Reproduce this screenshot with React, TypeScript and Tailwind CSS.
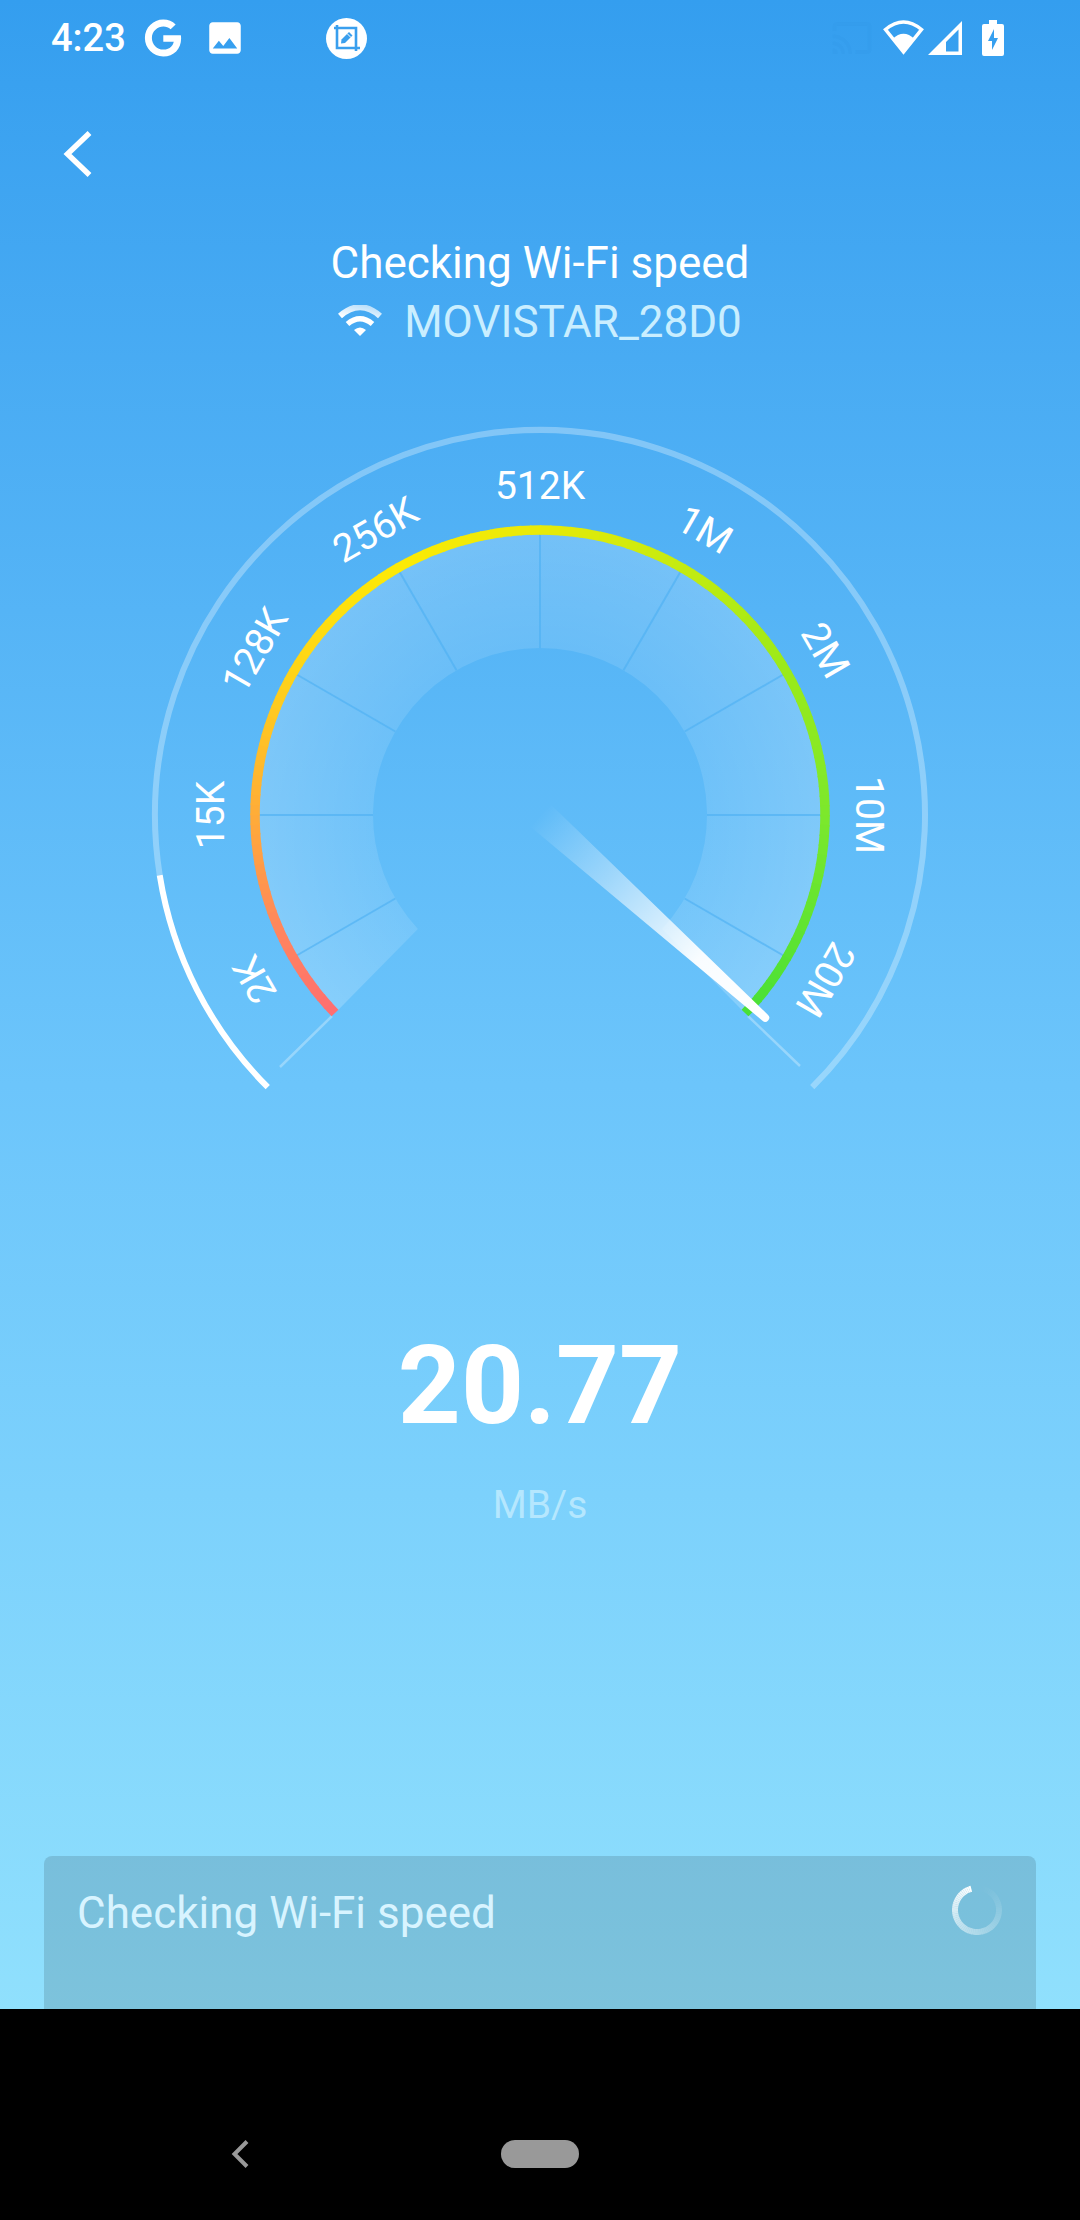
import { FaGoogle } from "react-icons/fa";
import { MdCast, MdImage } from "react-icons/md";

type Stop = { at: number; color: [number, number, number] };

const TICKS = [-120, -90, -60, -30, 0, 30, 60, 90, 120];
const LABELS = ["2K", "15K", "128K", "256K", "512K", "1M", "2M", "10M", "20M"];

// degrees clockwise from the top of the dial
const SCALE_COLORS: Stop[] = [
  { at: -134, color: [255, 110, 113] },
  { at: -115, color: [255, 132, 95] },
  { at: -90, color: [255, 172, 56] },
  { at: -60, color: [255, 212, 24] },
  { at: -30, color: [253, 234, 6] },
  { at: 0, color: [232, 234, 8] },
  { at: 30, color: [196, 235, 16] },
  { at: 60, color: [154, 234, 26] },
  { at: 90, color: [124, 232, 44] },
  { at: 134, color: [72, 224, 54] },
];

const CX = 390;
const CY = 390;

function polar(cx: number, cy: number, r: number, deg: number) {
  const rad = (deg * Math.PI) / 180;
  return [cx + r * Math.sin(rad), cy - r * Math.cos(rad)];
}

function arc(cx: number, cy: number, r: number, from: number, to: number) {
  const [x1, y1] = polar(cx, cy, r, from);
  const [x2, y2] = polar(cx, cy, r, to);
  const large = to - from > 180 ? 1 : 0;
  return `M${x1} ${y1}A${r} ${r} 0 ${large} 1 ${x2} ${y2}`;
}

function colorAt(deg: number) {
  const i = SCALE_COLORS.findIndex((s) => s.at >= deg);
  if (i <= 0) return `rgb(${SCALE_COLORS[0].color.join(",")})`;
  const a = SCALE_COLORS[i - 1];
  const b = SCALE_COLORS[i];
  const t = (deg - a.at) / (b.at - a.at);
  return `rgb(${a.color.map((c, k) => Math.round(c + (b.color[k] - c) * t)).join(",")})`;
}

function Gauge() {
  const steps = Array.from({ length: 134 }, (_, i) => -134 + i * 2);
  const [ox1, oy1] = polar(CX, CY, 281, -134);
  const [ox2, oy2] = polar(CX, CY, 281, 134);
  const [ix1, iy1] = polar(CX, CY, 167, -133);
  const [ix2, iy2] = polar(CX, CY, 167, 133);

  return (
    <svg
      viewBox="0 0 780 670"
      className="w-[780px] max-w-full"
      role="img"
      aria-label="Speed gauge"
    >
      <defs>
        <radialGradient id="band" gradientUnits="userSpaceOnUse" cx={CX} cy={CY} r="281">
          <stop offset="0.59" stopColor="#fff" stopOpacity="0.11" />
          <stop offset="1" stopColor="#fff" stopOpacity="0.2" />
        </radialGradient>
        <linearGradient id="needle" gradientUnits="userSpaceOnUse" x1="0" y1="0" x2="306" y2="0">
          <stop offset="0" stopColor="#fff" stopOpacity="0" />
          <stop offset="0.3" stopColor="#fff" stopOpacity="0.38" />
          <stop offset="0.7" stopColor="#fff" stopOpacity="0.95" />
          <stop offset="1" stopColor="#fff" />
        </linearGradient>
      </defs>

      <path d={arc(CX, CY, 385, -99, 135)} fill="none" stroke="#fff" strokeOpacity="0.3" strokeWidth="6" />
      <path d={arc(CX, CY, 385, -135, -99)} fill="none" stroke="#fff" strokeWidth="6" />

      <path
        d={`M${ox1} ${oy1}A281 281 0 1 1 ${ox2} ${oy2}L${ix2} ${iy2}A167 167 0 1 0 ${ix1} ${iy1}Z`}
        fill="url(#band)"
      />
      {TICKS.map((deg) => (
        <path
          key={deg}
          d={`M${CX} ${CY - 167}V${CY - 281}`}
          transform={`rotate(${deg} ${CX} ${CY})`}
          stroke="#4fb0f2"
          strokeOpacity="0.65"
          strokeWidth="2"
        />
      ))}
      <path d="M182 591L130 642M598 591L650 641" stroke="#fff" strokeOpacity="0.3" strokeWidth="2.5" />

      {steps.map((deg) => (
        <path
          key={deg}
          d={arc(CX, CY, 285, deg, Math.min(deg + 2.3, 134))}
          fill="none"
          stroke={colorAt(deg + 1)}
          strokeWidth="9.5"
        />
      ))}

      {LABELS.map((label, i) => (
        <text
          key={label}
          x={CX}
          y={CY - 316}
          transform={`rotate(${TICKS[i]} ${CX} ${CY})`}
          textAnchor="middle"
          fontSize="39"
          fill="#fff"
        >
          {label}
        </text>
      ))}

      <path
        d="M0 -15L303 -4A4 4 0 0 1 303 4L0 15Z"
        transform={`translate(${CX} ${CY}) rotate(42)`}
        fill="url(#needle)"
      />
    </svg>
  );
}

function Spinner() {
  const steps = Array.from({ length: 69 }, (_, i) => i * 5);
  return (
    <svg width="52" height="52" viewBox="0 0 52 52" role="status" aria-label="Loading">
      {steps.map((deg) => (
        <path
          key={deg}
          d={arc(26, 26, 22, deg, deg + 5)}
          fill="none"
          stroke="#fff"
          strokeOpacity={Math.pow(deg / 345, 1.4)}
          strokeWidth="6"
        />
      ))}
    </svg>
  );
}

function CropEditIcon() {
  return (
    <svg width="41" height="41" viewBox="0 0 41 41" aria-hidden="true">
      <circle cx="20.5" cy="20.5" r="20.5" fill="#fff" />
      <path d="M8 10H30V33M11 7V30H34" fill="none" stroke="#399fee" strokeWidth="2.6" />
      <path d="M15.500 21.500L23 14L26.500 17.500L19 25L15 25.500Z" fill="#399fee" />
      <path d="M21 15.500L25 19.500" stroke="#fff" strokeWidth="1" />
    </svg>
  );
}

function StatusBar() {
  return (
    <div className="flex h-[76px] items-center justify-between pl-[51px] pr-[76px] text-white">
      <div className="flex items-center">
        <span className="text-[38px] font-medium leading-none">4:23</span>
        <FaGoogle size={38} className="ml-[18px]" aria-hidden="true" />
        <MdImage size={42} className="ml-[22px]" aria-hidden="true" />
        <div className="ml-[80px]">
          <CropEditIcon />
        </div>
      </div>
      <div className="flex items-center">
        <MdCast size={42} className="mr-[10px] text-[#3399e8]/30" aria-hidden="true" />
        <svg width="42" height="36" viewBox="0 0 42 36" aria-hidden="true">
          <path d="M2.500 9.500Q20.500 -5.500 38.500 9.500L20.500 32Z" fill="none" stroke="#fff" strokeWidth="3.500" />
          <path d="M9.500 19Q20.500 8.500 31.500 19L20.500 33Z" fill="#fff" />
        </svg>
        <svg width="36" height="36" viewBox="0 0 36 36" className="ml-[2px]" aria-hidden="true">
          <path d="M35 1V35H1ZM31.500 9.500L19 22V31.500H31.500Z" fill="#fff" fillRule="evenodd" />
        </svg>
        <svg width="22" height="36" viewBox="0 0 22 36" className="ml-[19px]" aria-hidden="true">
          <path
            d="M7 0H15V4H20Q22 4 22 6V34Q22 36 20 36H2Q0 36 0 34V6Q0 4 2 4H7ZM12 9L6 21H10V30L16 18H12Z"
            fill="#fff"
            fillRule="evenodd"
          />
        </svg>
      </div>
    </div>
  );
}

export default function App() {
  return (
    <div className="flex min-h-screen flex-col bg-black font-[Roboto,sans-serif]">
      <main className="flex flex-1 flex-col bg-linear-to-b from-[#349eef] from-0% via-[#6cc5fb] via-54% to-[#90e0fd] to-100%">
        <StatusBar />

        <header className="flex px-[56px] pt-[48px]">
          <button type="button" aria-label="Back" className="flex h-[60px] w-[44px] items-center">
            <svg width="44" height="48" viewBox="0 0 44 48" fill="none" aria-hidden="true">
              <path d="M33.500 3L11.500 24L33.500 45" stroke="#fff" strokeWidth="5.5" />
            </svg>
          </button>
        </header>

        <section className="mt-[50px] flex flex-col items-center text-[44px] leading-[59px]">
          <h1 className="text-white">Checking Wi-Fi speed</h1>
          <div className="flex items-center gap-[22px] text-[#c9eeff]">
            <svg width="44" height="36" viewBox="0 0 44 36" fill="none" aria-hidden="true">
              <defs>
                <linearGradient id="wifi" x1="0" y1="1" x2="1" y2="0">
                  <stop offset="0" stopColor="#fff" />
                  <stop offset="1" stopColor="#fff" stopOpacity="0.6" />
                </linearGradient>
              </defs>
              <path d="M2 11Q22 -6.500 42 11" stroke="url(#wifi)" strokeWidth="6" />
              <path d="M9.500 19Q22 8.500 34.500 19" stroke="#fff" strokeWidth="5.500" />
              <path d="M16 25Q22 20 28 25L22 31Z" fill="#fff" />
            </svg>
            <p>MOVISTAR_28D0</p>
          </div>
        </section>

        <section className="mt-[73px] flex justify-center">
          <Gauge />
        </section>

        <section className="mt-[226px] flex flex-col items-center">
          <p className="text-[110px] font-bold leading-[130px] text-white">20.77</p>
          <p className="mt-[30px] text-[39px] leading-[48px] text-[#b5e7fe]">MB/s</p>
        </section>

        <section className="mx-[44px] mt-auto flex h-[153px] items-start justify-between rounded-t-lg bg-black/13 px-[33px] pt-[28px]">
          <p className="text-[44px] leading-[59px] text-[#d8f4ff]">Checking Wi-Fi speed</p>
          <Spinner />
        </section>
      </main>

      <nav className="grid h-[211px] grid-cols-[1fr_78px_1fr] items-end pb-[52px]">
        <button type="button" aria-label="System back" className="mr-[20px] justify-self-center">
          <svg width="28" height="28" viewBox="0 0 28 28" fill="none" aria-hidden="true">
            <path d="M20 1.500L7.500 14L20 26.500" stroke="#999" strokeWidth="4" />
          </svg>
        </button>
        <button type="button" aria-label="Home" className="h-[28px] rounded-full bg-[#999999]" />
      </nav>
    </div>
  );
}
